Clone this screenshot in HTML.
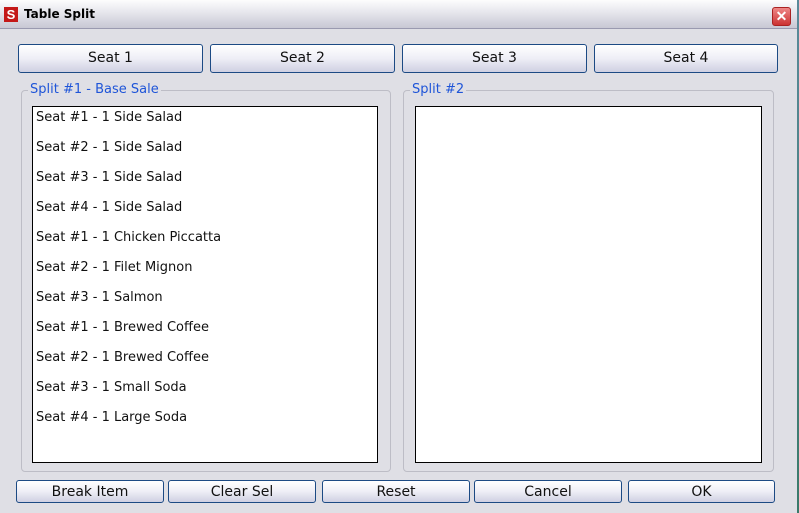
<!DOCTYPE html>
<html><head><style>
body{margin:0;width:799px;height:513px;overflow:hidden;background:#dfdfe3;font-family:"DejaVu Sans","Liberation Sans",sans-serif;position:relative}
.win{position:absolute;left:0;top:0;width:797px;height:513px;background:#dfdfe5;border-right:1px solid #8a8aa0}
.title{position:absolute;left:0;top:0;width:797px;height:28px;background:linear-gradient(#fdfdfd,#e8e8ee 40%,#c8c8d4);border-bottom:1px solid #9a9ab0}
.logo{position:absolute;left:4px;top:7px;width:14px;height:15px;background:#c41818;color:#fff;font:bold 13px "Liberation Sans",sans-serif;text-align:center;line-height:15px}
.tt{position:absolute;left:24px;top:7px;font:bold 12px "DejaVu Sans",sans-serif;color:#000}
.x{position:absolute;left:772px;top:7px;width:17px;height:17px;background:linear-gradient(#e88,#c33);border:1px solid #a22;border-radius:3px;color:#fff;font:bold 14px sans-serif;text-align:center;line-height:17px}
.btn{position:absolute;box-sizing:border-box;border:1px solid #1c4a84;border-radius:3px;background:linear-gradient(#fff,#eeeef6 50%,#cfd0e2);font-size:14px;color:#111;text-align:center}
.grp{position:absolute;box-sizing:border-box;border:1px solid #bdbdc6;border-radius:4px}
.lg{position:absolute;top:-9px;left:6px;background:#dfdfe5;color:#1f55d8;font-size:13px;padding:0 2px}
.lb{position:absolute;box-sizing:border-box;background:#fff;border:1px solid #000}
.it{position:absolute;left:3px;font-size:13px;color:#111;white-space:nowrap}
.edge{position:absolute;left:797px;top:0;width:2px;height:513px;background:linear-gradient(#5a8a9a,#3a7a6a)}
</style></head><body>
<div class="win">
<div class="title"><div class="logo">S</div><div class="tt">Table Split</div><div class="x">✕</div></div>
<div class="btn" style="left:18px;top:44px;width:185px;height:29px;line-height:27px">Seat 1</div>
<div class="btn" style="left:210px;top:44px;width:185px;height:29px;line-height:27px">Seat 2</div>
<div class="btn" style="left:402px;top:44px;width:185px;height:29px;line-height:27px">Seat 3</div>
<div class="btn" style="left:594px;top:44px;width:184px;height:29px;line-height:27px">Seat 4</div>
<div class="grp" style="left:21px;top:90px;width:370px;height:382px"><div class="lg">Split #1 - Base Sale</div></div>
<div class="grp" style="left:403px;top:90px;width:371px;height:382px"><div class="lg">Split #2</div></div>
<div class="lb" style="left:32px;top:106px;width:346px;height:357px">
<div class="it" style="top:3px">Seat #1 - 1 Side Salad</div>
<div class="it" style="top:33px">Seat #2 - 1 Side Salad</div>
<div class="it" style="top:63px">Seat #3 - 1 Side Salad</div>
<div class="it" style="top:93px">Seat #4 - 1 Side Salad</div>
<div class="it" style="top:123px">Seat #1 - 1 Chicken Piccatta</div>
<div class="it" style="top:153px">Seat #2 - 1 Filet Mignon</div>
<div class="it" style="top:183px">Seat #3 - 1 Salmon</div>
<div class="it" style="top:213px">Seat #1 - 1 Brewed Coffee</div>
<div class="it" style="top:243px">Seat #2 - 1 Brewed Coffee</div>
<div class="it" style="top:273px">Seat #3 - 1 Small Soda</div>
<div class="it" style="top:303px">Seat #4 - 1 Large Soda</div>
</div>
<div class="lb" style="left:415px;top:106px;width:347px;height:357px"></div>
<div class="btn" style="left:16px;top:480px;width:148px;height:23px;line-height:22px">Break Item</div>
<div class="btn" style="left:168px;top:480px;width:148px;height:23px;line-height:22px">Clear Sel</div>
<div class="btn" style="left:322px;top:480px;width:148px;height:23px;line-height:22px">Reset</div>
<div class="btn" style="left:474px;top:480px;width:148px;height:23px;line-height:22px">Cancel</div>
<div class="btn" style="left:628px;top:480px;width:147px;height:23px;line-height:22px">OK</div>
</div>
<div class="edge"></div>
</body></html>
